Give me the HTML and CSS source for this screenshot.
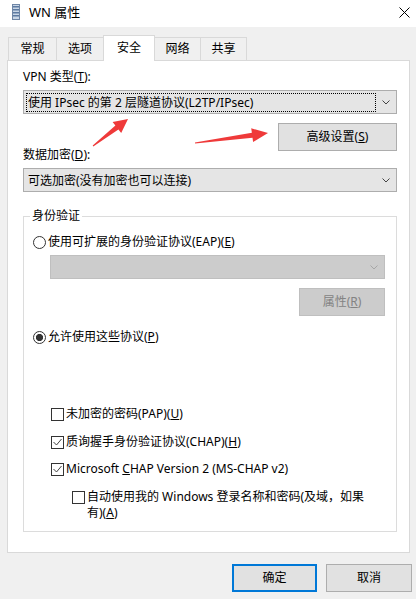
FILE: index.html
```html
<!DOCTYPE html>
<html lang="zh-CN">
<head>
<meta charset="utf-8">
<title>WN 属性</title>
<link rel="stylesheet" href="styles.css">
</head>
<body>
<div class="window">
  <header class="titlebar">
    <svg class="app-icon" width="8" height="16" viewBox="0 0 8 16">
      <rect x="0.5" y="0.5" width="7" height="15" fill="#c9d6e6" stroke="#6f86a6"/>
      <rect x="1" y="2" width="6" height="1.5" fill="#5d7aa1"/>
      <rect x="1" y="5" width="6" height="1.5" fill="#5d7aa1"/>
      <rect x="1" y="8" width="6" height="1.5" fill="#5d7aa1"/>
      <rect x="1" y="11" width="6" height="1.5" fill="#5d7aa1"/>
    </svg>
    <span class="title">WN 属性</span>
    <svg class="close" width="11" height="11" viewBox="0 0 11 11">
      <path d="M0.5 0.5 L10.5 10.5 M10.5 0.5 L0.5 10.5" stroke="#000" stroke-width="1" fill="none"/>
    </svg>
  </header>

  <main class="client">
    <nav class="tabs">
      <div class="tab tab-general">常规</div>
      <div class="tab tab-options">选项</div>
      <div class="tab tab-security active">安全</div>
      <div class="tab tab-network">网络</div>
      <div class="tab tab-sharing">共享</div>
    </nav>

    <section class="panel">
      <div class="label">VPN 类型(<u>T</u>):</div>
      <div class="combo focused">
        <span class="combo-value">使用 IPsec 的第 2 层隧道协议(L2TP/IPsec)</span>
        <span class="combo-arrow"><svg width="8" height="5" viewBox="0 0 8 5"><path d="M0.5 0.5 L4 4 L7.5 0.5" stroke="#444" fill="none"/></svg></span>
      </div>
      <div class="row-right">
        <button class="btn btn-adv">高级设置(<u>S</u>)</button>
      </div>
      <div class="label label-enc">数据加密(<u>D</u>):</div>
      <div class="combo">
        <span class="combo-value">可选加密(没有加密也可以连接)</span>
        <span class="combo-arrow"><svg width="8" height="5" viewBox="0 0 8 5"><path d="M0.5 0.5 L4 4 L7.5 0.5" stroke="#444" fill="none"/></svg></span>
      </div>

      <fieldset class="group">
        <legend>身份验证</legend>
        <div class="option">
          <span class="radio"></span>
          <span>使用可扩展的身份验证协议(EAP)(<u>E</u>)</span>
        </div>
        <div class="combo disabled eap">
          <span class="combo-value"></span>
          <span class="combo-arrow"><svg width="8" height="5" viewBox="0 0 8 5"><path d="M0.5 0.5 L4 4 L7.5 0.5" stroke="#a6a6a6" fill="none"/></svg></span>
        </div>
        <div class="row-right">
          <button class="btn disabled btn-prop">属性(<u>R</u>)</button>
        </div>
        <div class="option opt-allow">
          <span class="radio checked"></span>
          <span>允许使用这些协议(<u>P</u>)</span>
        </div>
        <div class="option check cb-pap">
          <span class="checkbox"></span>
          <span>未加密的密码(PAP)(<u>U</u>)</span>
        </div>
        <div class="option check cb-chap">
          <span class="checkbox"><svg width="11" height="11" viewBox="0 0 11 11"><path d="M1.5 5 L4.5 8 L9.5 2" stroke="#444" fill="none"/></svg></span>
          <span>质询握手身份验证协议(CHAP)(<u>H</u>)</span>
        </div>
        <div class="option check cb-mschap">
          <span class="checkbox"><svg width="11" height="11" viewBox="0 0 11 11"><path d="M1.5 5 L4.5 8 L9.5 2" stroke="#444" fill="none"/></svg></span>
          <span>Microsoft <u>C</u>HAP Version 2 (MS-CHAP v2)</span>
        </div>
        <div class="option check cb-auto">
          <span class="checkbox"></span>
          <span class="wrap-text"><span class="line">自动使用我的 Windows 登录名称和密码(及域，如果</span><span class="line">有)(<u>A</u>)</span></span>
        </div>
      </fieldset>
    </section>

    <div class="dialog-buttons">
      <button class="btn btn-ok">确定</button>
      <button class="btn btn-cancel">取消</button>
    </div>
  </main>

  <svg class="annotations" width="416" height="599" viewBox="0 0 416 599">
    <polygon fill="#ef3a3a" points="92.7,145.6 115.4,125.6 112.6,122.0 128,119 121.2,133.1 118.4,129.5 93.3,146.4"/>
    <polygon fill="#ef3a3a" points="194.9,142.5 251.9,132.7 251.2,128.3 268,133 253.1,142.1 252.5,137.7 195.1,143.5"/>
  </svg>
</div>
</body>
</html>
```

FILE: styles.css
```css
html, body {
  margin: 0;
  padding: 0;
}

body {
  background: #f0f0f0;
  font-family: "Noto Sans", "Noto Sans CJK SC", sans-serif;
  font-size: 12px;
  line-height: 16px;
  color: #000;
}

u {
  text-decoration: underline;
  text-underline-offset: 1px;
}

.window {
  width: 416px;
  height: 599px;
  position: relative;
  overflow: hidden;
}

/* title bar */
.titlebar {
  box-sizing: border-box;
  height: 27px;
  background: #fff;
  display: flex;
  align-items: center;
  padding: 0 6px 3px 12px;
}

.app-icon {
  display: block;
}

.title {
  margin-left: 9px;
  font-size: 13px;
}

.close {
  margin-left: auto;
  display: block;
}

/* client area */
.client {
  padding: 8px 6px 0 7px;
}

.tabs {
  display: flex;
  align-items: flex-end;
  height: 25px;
}

.tab {
  box-sizing: border-box;
  height: 23px;
  border: 1px solid #d9d9d9;
  border-bottom: none;
  background: #f0f0f0;
  text-align: center;
  line-height: 22px;
  margin-left: -1px;
}

.tab:first-child {
  margin-left: 1px;
}

.tab.active {
  height: 26px;
  margin-bottom: -1px;
  background: #fff;
  line-height: 24px;
  position: relative;
  z-index: 1;
}

.tab-general { width: 49px; }
.tab-options { width: 48px; }
.tab-security { width: 52px; }
.tab-network { width: 47px; }
.tab-sharing { width: 47px; }

.panel {
  box-sizing: border-box;
  height: 493px;
  background: #fff;
  border: 1px solid #d9d9d9;
  padding: 8px 12px 0 15px;
}

.label {
  height: 16px;
  margin-bottom: 5px;
  white-space: nowrap;
}

.label-enc {
  margin-top: -4px;
}

/* combobox */
.combo {
  box-sizing: border-box;
  height: 24px;
  display: flex;
  border: 1px solid #adadad;
  background: #e5e5e5;
  padding: 2px 0 1px 2px;
}

.combo-value {
  flex: 1;
  min-width: 0;
  border: 1px dotted transparent;
  padding: 0 1px;
  line-height: 17px;
  white-space: nowrap;
  overflow: hidden;
}

.combo.focused .combo-value {
  border-color: #000;
}

.combo-arrow {
  width: 20px;
  display: flex;
  align-items: center;
  justify-content: center;
}

.combo-arrow svg {
  display: block;
}

.combo.disabled {
  background: #cccccc;
  border-color: #bfbfbf;
}

.combo.eap {
  margin: 5px 0 0 17px;
}

/* buttons */
.row-right {
  display: flex;
  justify-content: flex-end;
}

.btn {
  box-sizing: border-box;
  height: 28px;
  border: 1px solid #adadad;
  background: #e1e1e1;
  font: inherit;
  line-height: 16px;
  color: #000;
  padding: 0;
  margin: 0;
}

.btn.disabled {
  background: #cccccc;
  border-color: #bfbfbf;
  color: #838383;
}

.btn-adv {
  width: 119px;
  margin-top: 9px;
}

.btn-prop {
  width: 86px;
  margin-top: 9px;
}

/* group box */
.group {
  margin: 16px 0 0;
  padding: 10px 11px 10px 9px;
  border: 1px solid #dcdcdc;
  min-width: 0;
}

.group legend {
  padding: 0 2px;
  margin-left: -3px;
  line-height: 16px;
}

.option {
  display: flex;
  align-items: center;
  min-height: 16px;
  white-space: nowrap;
}

.radio {
  box-sizing: border-box;
  width: 13px;
  height: 13px;
  border: 1px solid #333;
  border-radius: 50%;
  background: #fff;
  margin-right: 2px;
  flex: none;
}

.radio.checked {
  background: radial-gradient(circle, #333 0 3.3px, #fff 3.9px);
}

.opt-allow {
  margin-top: 13px;
}

.checkbox {
  box-sizing: border-box;
  width: 13px;
  height: 13px;
  border: 1px solid #333;
  background: #fff;
  margin-right: 2px;
  flex: none;
  display: flex;
  align-items: center;
  justify-content: center;
}

.checkbox svg {
  display: block;
}

.check {
  padding-left: 18px;
}

.cb-pap { margin-top: 61px; }
.cb-chap { margin-top: 12px; }
.cb-mschap { margin-top: 11px; }

.cb-auto {
  margin-top: 12px;
  padding-left: 39px;
  align-items: flex-start;
}

.cb-auto .checkbox {
  margin-top: 2px;
}

.wrap-text {
  display: block;
}

.wrap-text .line {
  display: block;
}

/* dialog buttons */
.dialog-buttons {
  display: flex;
  justify-content: flex-end;
  gap: 9px;
  margin-top: 11px;
  margin-right: -2px;
}

.btn-ok {
  width: 85px;
  border: 2px solid #0078d7;
}

.btn-cancel {
  width: 86px;
}

/* annotation arrows drawn over the dialog */
.annotations {
  position: absolute;
  left: 0;
  top: 0;
  pointer-events: none;
}
```
